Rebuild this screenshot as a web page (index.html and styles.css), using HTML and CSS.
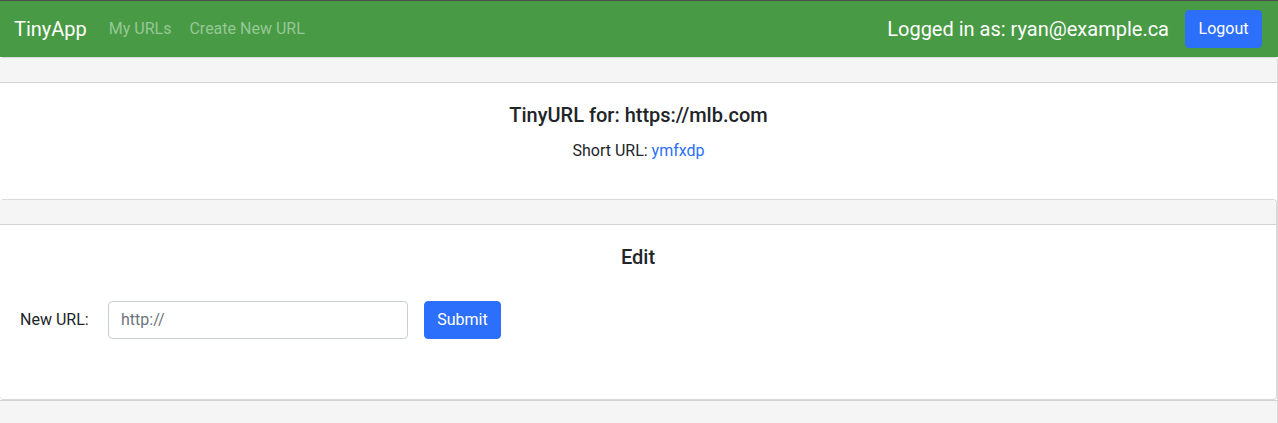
FILE: index.html
```html
<!DOCTYPE html>
<html lang="en">
<head>
<meta charset="utf-8">
<meta name="viewport" content="width=device-width, initial-scale=1">
<title>TinyApp</title>
<link rel="stylesheet" href="styles.css">
</head>
<body>
<header class="navbar">
  <a class="brand" href="#">TinyApp</a>
  <nav class="nav-links">
    <a class="nav-link" href="#">My URLs</a>
    <a class="nav-link" href="#">Create New URL</a>
  </nav>
  <form class="session">
    <span class="user">Logged in as: ryan@example.ca</span>
    <button class="btn" type="submit">Logout</button>
  </form>
</header>
<main class="card">
  <div class="card-header"></div>
  <section class="card-body">
    <h1 class="card-title">TinyURL for: https://mlb.com</h1>
    <p class="card-text">Short URL: <a class="short-link" href="#">ymfxdp</a></p>
  </section>
  <section class="card card-inner">
    <div class="card-header"></div>
    <div class="card-body">
      <h2 class="card-title">Edit</h2>
      <form class="edit-form">
        <label class="field-label" for="new-url">New URL:</label>
        <input class="url-input" id="new-url" type="text" placeholder="http://">
        <button class="btn" type="submit">Submit</button>
      </form>
    </div>
  </section>
  <div class="card-footer"></div>
</main>
</body>
</html>
```
FILE: styles.css
```css
*,
*::before,
*::after {
  box-sizing: border-box;
}

body {
  margin: 0;
  font-family: Roboto, "Liberation Sans", sans-serif;
  font-size: 16px;
  line-height: 24px;
  color: #212529;
  background: #fff;
}

a {
  text-decoration: none;
}

.navbar {
  display: flex;
  align-items: center;
  padding: 9px 16px 9px 14px;
  border-top: 1px solid #4c4c4c;
  background: #489a45;
}

.brand {
  margin-right: 14px;
  font-size: 20px;
  color: #fff;
}

.nav-links {
  display: flex;
  gap: 2px;
}

.nav-link {
  padding: 0 8px;
  color: #96c895;
}

.session {
  display: flex;
  align-items: center;
  gap: 16px;
  margin-left: auto;
}

.user {
  font-size: 20px;
  color: #fff;
}

.btn {
  min-width: 77px;
  padding: 6px 12px;
  border: 1px solid #2c6ffa;
  border-radius: 4px;
  font: inherit;
  color: #fff;
  background: #2c6ffa;
  cursor: pointer;
}

.card {
  border: 1px solid #d9d9d9;
  border-left: 0;
  border-radius: 4px;
  overflow: hidden;
}

.card-header {
  height: 25px;
  border-bottom: 1px solid #d2d2d2;
  background: #f5f5f5;
}

.card-body {
  padding: 20px 20px 36px;
}

.card-title {
  margin: 0 0 12px;
  font-size: 20px;
  font-weight: 500;
  text-align: center;
}

.card-text {
  margin: 0;
  text-align: center;
}

.short-link {
  color: #2c6ffa;
}

.edit-form {
  display: flex;
  align-items: center;
  gap: 16px;
  padding: 20px 0 24px;
}

.field-label {
  min-width: 72px;
}

.url-input {
  width: 300px;
  padding: 6px 12px;
  border: 1px solid #c9ced6;
  border-radius: 4px;
  font: inherit;
  color: #212529;
  background: #fff;
}

.url-input::placeholder {
  color: #6c757d;
  opacity: 1;
}

.card-footer {
  height: 25px;
  border-top: 1px solid #d2d2d2;
  background: #f5f5f5;
}
```
